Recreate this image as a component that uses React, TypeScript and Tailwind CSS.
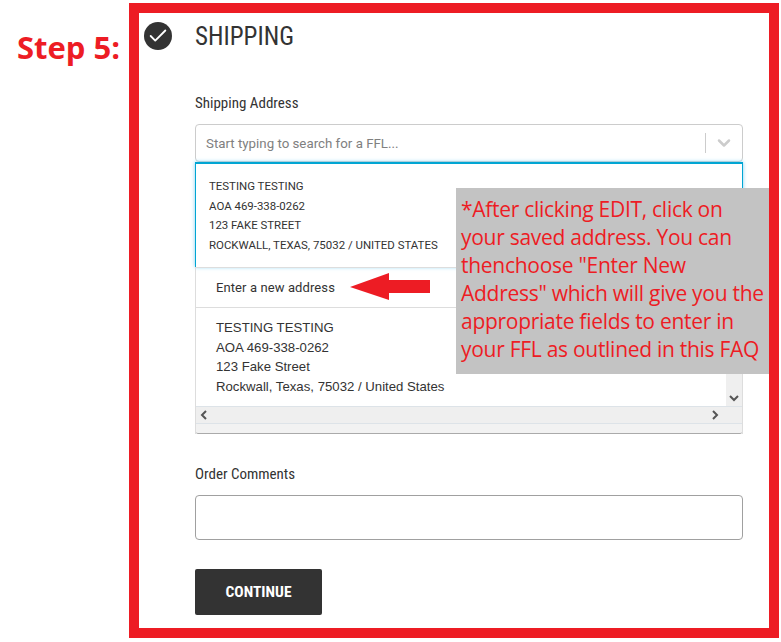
import { Check, ChevronDown } from "lucide-react";

const condensed = "font-['Roboto_Condensed','Roboto',sans-serif] [font-stretch:75%]";

function ScrollArrow({ dir }: { dir: "left" | "right" | "down" }) {
  const d = dir === "left" ? "M6 1 2 5l4 4" : dir === "right" ? "M4 1l4 4-4 4" : "M1 3l4 4 4-4";
  return (
    <svg width="10" height="10" viewBox="0 0 10 10" fill="none" stroke="#555" strokeWidth="2">
      <path d={d} />
    </svg>
  );
}

function SavedAddress() {
  return (
    <div className="h-[105px] border-t-2 border-x border-[#00a5d3] border-b-0 shadow-[0_0_4px_#7fd0f0] pl-[13px] pt-[13px] text-[11.45px] leading-[19.6px] text-[#333] font-['Roboto',sans-serif]">
      <div>TESTING TESTING</div>
      <div>AOA 469-338-0262</div>
      <div>123 FAKE STREET</div>
      <div>ROCKWALL, TEXAS, 75032 / UNITED STATES</div>
    </div>
  );
}

function AddressMenu() {
  return (
    <div className="border-x border-[#ddd] text-[#333] font-['Roboto',sans-serif]">
      <div className="h-[41px] border-y border-[#ddd] pl-5 flex items-center text-[13px] tracking-[0.1px]">
        Enter a new address
      </div>
      <div className="flex h-[98px]">
        <div className="flex-1 pl-5 pt-[10px] text-[13.2px] leading-[19.6px] font-['Liberation_Sans',sans-serif]">
          <div>TESTING TESTING</div>
          <div>AOA 469-338-0262</div>
          <div>123 Fake Street</div>
          <div>Rockwall, Texas, 75032 / United States</div>
        </div>
        <div className="w-[16px] bg-[#efefef] flex items-end justify-center pb-[3px]">
          <ScrollArrow dir="down" />
        </div>
      </div>
      <div className="h-[18px] bg-[#efefef] border-t border-[#dde3e8] border-b flex items-center justify-between pl-[4px] pr-[23px]">
        <ScrollArrow dir="left" />
        <ScrollArrow dir="right" />
      </div>
      <div className="h-[10px] bg-[#f2f2f2] border-b border-[#aaa] rounded-b-[2px]" />
    </div>
  );
}

export default function App() {
  return (
    <div className="relative w-[781px] h-[642px] bg-white flex items-start overflow-hidden">
      <div className="w-[129px] pl-[17px] pt-[27px] text-[31px] leading-[40px] font-bold text-[#ed1c24] font-['Open_Sans',sans-serif] whitespace-nowrap">
        Step 5:
      </div>
      <div className="mt-[3px] w-[650px] h-[635px] border-[10px] border-[#ed1c24] pl-[5px] pt-[9px] flex items-start">
        <div className="w-[28px] h-[28px] rounded-full bg-[#333] flex items-center justify-center shrink-0">
          <Check size={22} color="#fff" strokeWidth={2} />
        </div>
        <div className="ml-[23px] w-[548px]">
          <h2 className={`${condensed} pt-px text-[25px] leading-[28px] text-[#333] h-[28px]`}>SHIPPING</h2>
          <label className={`${condensed} block mt-[43px] text-[15px] leading-[20px] text-[#333]`}>
            Shipping Address
          </label>
          <div className="mt-[11px] h-[38px] border border-[#ccc] rounded-[4px] flex items-center pl-[10px] text-[13.3px] text-[#808080] font-['Roboto',sans-serif]">
            <span className="flex-1 pt-px">Start typing to search for a FFL...</span>
            <span className="w-px h-[20px] bg-[#ccc]" />
            <span className="w-[36px] flex justify-center">
              <ChevronDown size={20} color="#ccc" strokeWidth={3} />
            </span>
          </div>
          <SavedAddress />
          <AddressMenu />
          <label className={`${condensed} block mt-[30px] text-[15px] leading-[20px] text-[#333]`}>
            Order Comments
          </label>
          <div className="mt-[11px] h-[45px] border border-[#a0a0a0] rounded-[4px]" />
          <button className={`${condensed} mt-[29px] block w-[127px] h-[46px] pt-px bg-[#333] rounded-[2px] text-white text-[15.5px] font-bold`}>
            CONTINUE
          </button>
        </div>
      </div>

      <svg className="absolute left-[350px] top-[273px]" width="80" height="27" viewBox="0 0 80 27">
        <path d="M0 14 39 0v7h41v13H39v7z" fill="#ed1c24" />
      </svg>
      <div className="absolute left-[456px] top-[188px] w-[313px] h-[186px] bg-[#c3c3c3] pl-[5px] pt-[7px] text-[21px] leading-[28px] text-[#ed1c24] font-['Open_Sans',sans-serif] whitespace-nowrap tracking-[-0.28px]">
        *After clicking EDIT, click on
        <br />
        your saved address. You can
        <br />
        thenchoose "Enter New
        <br />
        Address" which will give you the
        <br />
        appropriate fields to enter in
        <br />
        your FFL as outlined in this FAQ
      </div>
    </div>
  );
}
